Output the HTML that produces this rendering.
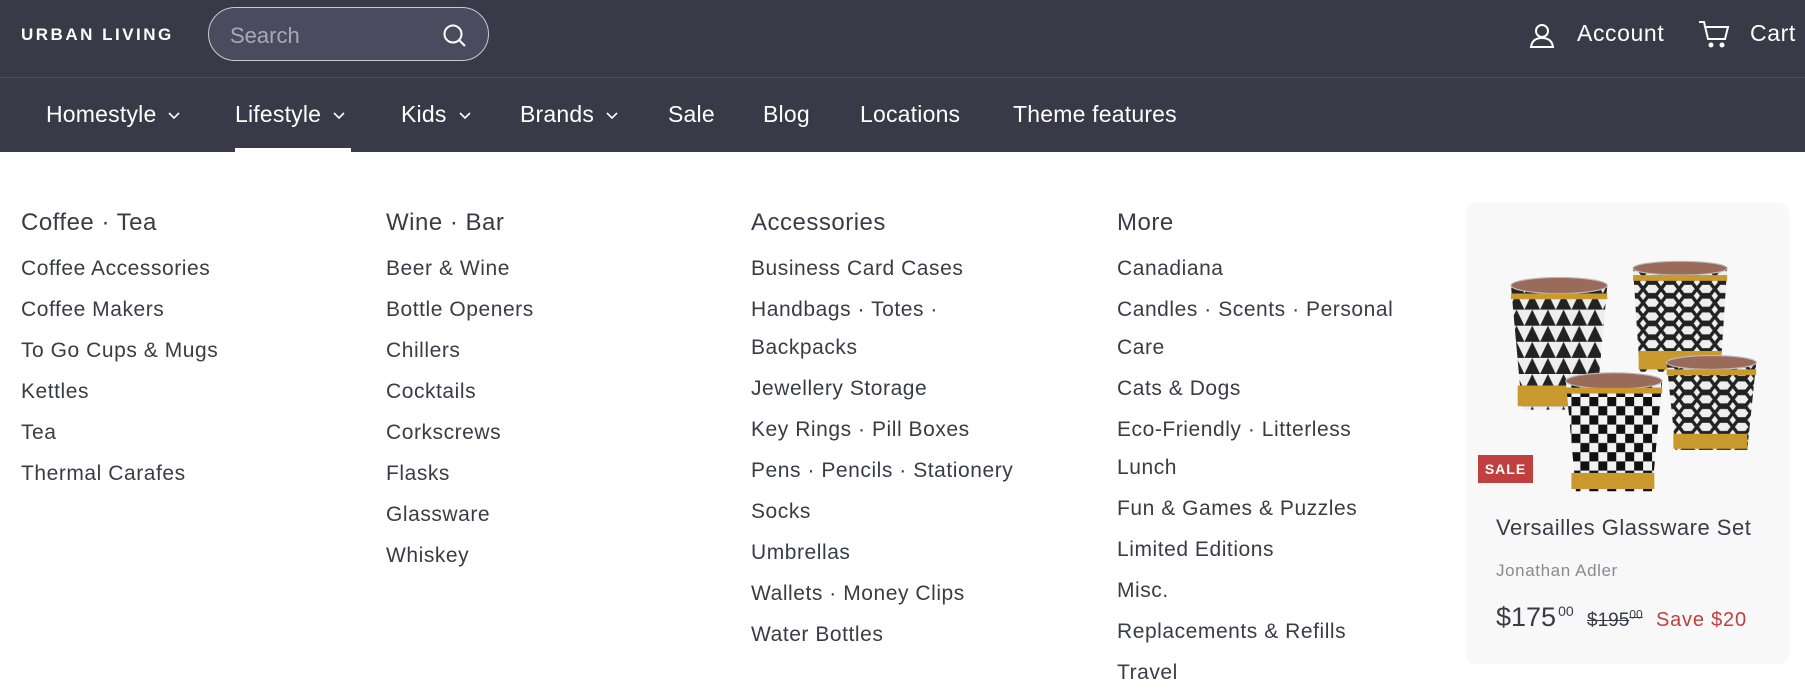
<!DOCTYPE html>
<html><head><meta charset="utf-8"><style>
*{margin:0;padding:0;box-sizing:border-box}
body{width:1805px;height:695px;overflow:hidden;background:#fff;font-family:"Liberation Sans",sans-serif;color:#3b3b47}
.top{position:absolute;left:0;top:0;width:1805px;height:78px;background:#383a47;border-bottom:1px solid #4c4e5b}
.logo{position:absolute;left:21px;top:25px;color:#fff;font-weight:bold;font-size:17px;letter-spacing:2.5px}
.search{position:absolute;left:208px;top:7px;width:281px;height:54px;border:1px solid #c9c9d2;border-radius:27px;background:#4b4b5f}
.search span{position:absolute;left:21px;top:15px;font-size:22px;color:#a9a9b6}
.search svg{position:absolute;right:20px;top:15px}
.acct{position:absolute;top:20px;color:#fff;font-size:23px;letter-spacing:.6px}
.nav{position:absolute;left:0;top:78px;width:1805px;height:74px;background:#383a47}
.nav a{position:absolute;top:23px;color:#fff;font-size:23px;text-decoration:none;letter-spacing:.2px}
.nav a svg{margin-left:12px;vertical-align:middle}
.ul{position:absolute;left:235px;top:148px;width:116px;height:4px;background:#fff}
.col{position:absolute;top:209px}
.col h3{font-weight:normal;font-size:24px;letter-spacing:.5px;height:41px}
.col div{font-size:21px;letter-spacing:.55px;line-height:38px;margin-bottom:3px;width:300px}
.card{position:absolute;left:1466px;top:203px;width:323px;height:461px;background:#f8f8f8;border-radius:10px}
.sale{position:absolute;left:12px;top:252px;width:55px;height:28px;background:#c0403f;color:#fff;font-size:14px;font-weight:bold;letter-spacing:1px;text-align:center;line-height:28px}
</style></head><body>
<div class="top">
 <div class="logo">URBAN LIVING</div>
 <div class="search"><span>Search</span><svg width="26" height="26" viewBox="0 0 26 26" fill="none" stroke="#fff" stroke-width="2"><circle cx="11" cy="11" r="8.5"/><path d="M17 17l6 6"/></svg></div>
 <svg style="position:absolute;left:1529px;top:22px" width="26" height="26" viewBox="0 0 26 26" fill="none" stroke="#fff" stroke-width="2"><circle cx="13" cy="9" r="6"/><path d="M2 25c1-7 6-9 11-9s10 2 11 9z"/></svg>
 <div class="acct" style="left:1577px">Account</div>
 <svg style="position:absolute;left:1698px;top:20px" width="32" height="28" viewBox="0 0 32 28" fill="none" stroke="#fff" stroke-width="2"><path d="M1 2h5l4 17h17l3-12H8"/><circle cx="13" cy="25" r="1.5" fill="#fff"/><circle cx="24" cy="25" r="1.5" fill="#fff"/></svg>
 <div class="acct" style="left:1750px">Cart</div>
</div>
<div class="nav">
 <a style="left:46px">Homestyle<svg width="12" height="8" viewBox="0 0 12 8" fill="none" stroke="#fff" stroke-width="1.6"><path d="M1 1l5 5 5-5"/></svg></a>
 <a style="left:235px">Lifestyle<svg width="12" height="8" viewBox="0 0 12 8" fill="none" stroke="#fff" stroke-width="1.6"><path d="M1 1l5 5 5-5"/></svg></a>
 <a style="left:401px">Kids<svg width="12" height="8" viewBox="0 0 12 8" fill="none" stroke="#fff" stroke-width="1.6"><path d="M1 1l5 5 5-5"/></svg></a>
 <a style="left:520px">Brands<svg width="12" height="8" viewBox="0 0 12 8" fill="none" stroke="#fff" stroke-width="1.6"><path d="M1 1l5 5 5-5"/></svg></a>
 <a style="left:668px">Sale</a>
 <a style="left:763px">Blog</a>
 <a style="left:860px">Locations</a>
 <a style="left:1013px">Theme features</a>
</div>
<div class="ul"></div>
<div class="col" style="left:21px"><h3>Coffee · Tea</h3><div>Coffee Accessories</div><div>Coffee Makers</div><div>To Go Cups &amp; Mugs</div><div>Kettles</div><div>Tea</div><div>Thermal Carafes</div></div>
<div class="col" style="left:386px"><h3>Wine · Bar</h3><div>Beer &amp; Wine</div><div>Bottle Openers</div><div>Chillers</div><div>Cocktails</div><div>Corkscrews</div><div>Flasks</div><div>Glassware</div><div>Whiskey</div></div>
<div class="col" style="left:751px"><h3>Accessories</h3><div>Business Card Cases</div><div style="width:200px">Handbags · Totes · Backpacks</div><div>Jewellery Storage</div><div>Key Rings · Pill Boxes</div><div>Pens · Pencils · Stationery</div><div>Socks</div><div>Umbrellas</div><div>Wallets · Money Clips</div><div>Water Bottles</div></div>
<div class="col" style="left:1117px"><h3>More</h3><div>Canadiana</div><div style="width:290px">Candles · Scents · Personal Care</div><div>Cats &amp; Dogs</div><div style="width:260px">Eco-Friendly · Litterless Lunch</div><div>Fun &amp; Games &amp; Puzzles</div><div>Limited Editions</div><div>Misc.</div><div>Replacements &amp; Refills</div><div>Travel</div></div>
<div class="card">
 <svg style="position:absolute;left:0;top:0" width="323" height="300" viewBox="0 0 323 300">
  <defs>
   <pattern id="p1" width="14" height="14" patternUnits="userSpaceOnUse"><rect width="14" height="14" fill="#eee"/><path d="M0 14L7 0 14 14z" fill="#222"/></pattern>
   <pattern id="p2" width="16" height="12" patternUnits="userSpaceOnUse"><rect width="16" height="12" fill="#eee"/><path d="M0 6l4-5h8l4 5-4 5H4z" fill="none" stroke="#222" stroke-width="3"/></pattern>
   <pattern id="p3" width="16" height="16" patternUnits="userSpaceOnUse"><rect width="16" height="16" fill="#f2f2f2"/><rect width="8" height="8" fill="#111"/><rect x="8" y="8" width="8" height="8" fill="#111"/></pattern>
  </defs>
  <g transform="translate(-20,10) scale(1.12,1.15)">
  <g><path d="M58 63h86l-10 108h-66z" fill="url(#p1)"/><ellipse cx="101" cy="63" rx="43" ry="7" fill="#9a6a5a" stroke="#bbb"/><rect x="64" y="150" width="74" height="18" fill="#c9992e"/><rect x="58" y="70" width="86" height="5" fill="#c9992e"/></g>
  <g><path d="M167 48h84l-6 90h-72z" fill="url(#p2)"/><ellipse cx="209" cy="48" rx="42" ry="6" fill="#9a6a5a" stroke="#bbb"/><rect x="172" y="120" width="74" height="16" fill="#c9992e"/><rect x="167" y="54" width="84" height="5" fill="#c9992e"/></g>
  <g><path d="M197 130h80l-8 76h-64z" fill="url(#p2)"/><ellipse cx="237" cy="130" rx="40" ry="6" fill="#9a6a5a" stroke="#bbb"/><rect x="203" y="192" width="66" height="13" fill="#c9992e"/><rect x="197" y="136" width="80" height="5" fill="#c9992e"/></g>
  <g><path d="M107 146h86l-9 96h-68z" fill="url(#p3)"/><ellipse cx="150" cy="146" rx="43" ry="7" fill="#9a6a5a" stroke="#bbb"/><rect x="112" y="226" width="74" height="14" fill="#c9992e"/><rect x="107" y="152" width="86" height="5" fill="#c9992e"/></g>
  </g>
 </svg>
 <div class="sale">SALE</div>
 <div style="position:absolute;left:30px;top:312px;font-size:22px;letter-spacing:.5px">Versailles Glassware Set</div>
 <div style="position:absolute;left:30px;top:358px;font-size:17px;color:#8a8a90;letter-spacing:.6px">Jonathan Adler</div>
 <div style="position:absolute;left:30px;top:399px;white-space:nowrap"><span style="font-size:27px">$175<sup style="font-size:14px;margin-left:2px">00</sup></span>&nbsp;&nbsp;&nbsp;<span style="font-size:19px;text-decoration:line-through">$195<sup style="font-size:12px">00</sup></span>&nbsp;&nbsp;&nbsp;<span style="font-size:20px;color:#c0403f;letter-spacing:.8px">Save $20</span></div>
</div>
</body></html>
